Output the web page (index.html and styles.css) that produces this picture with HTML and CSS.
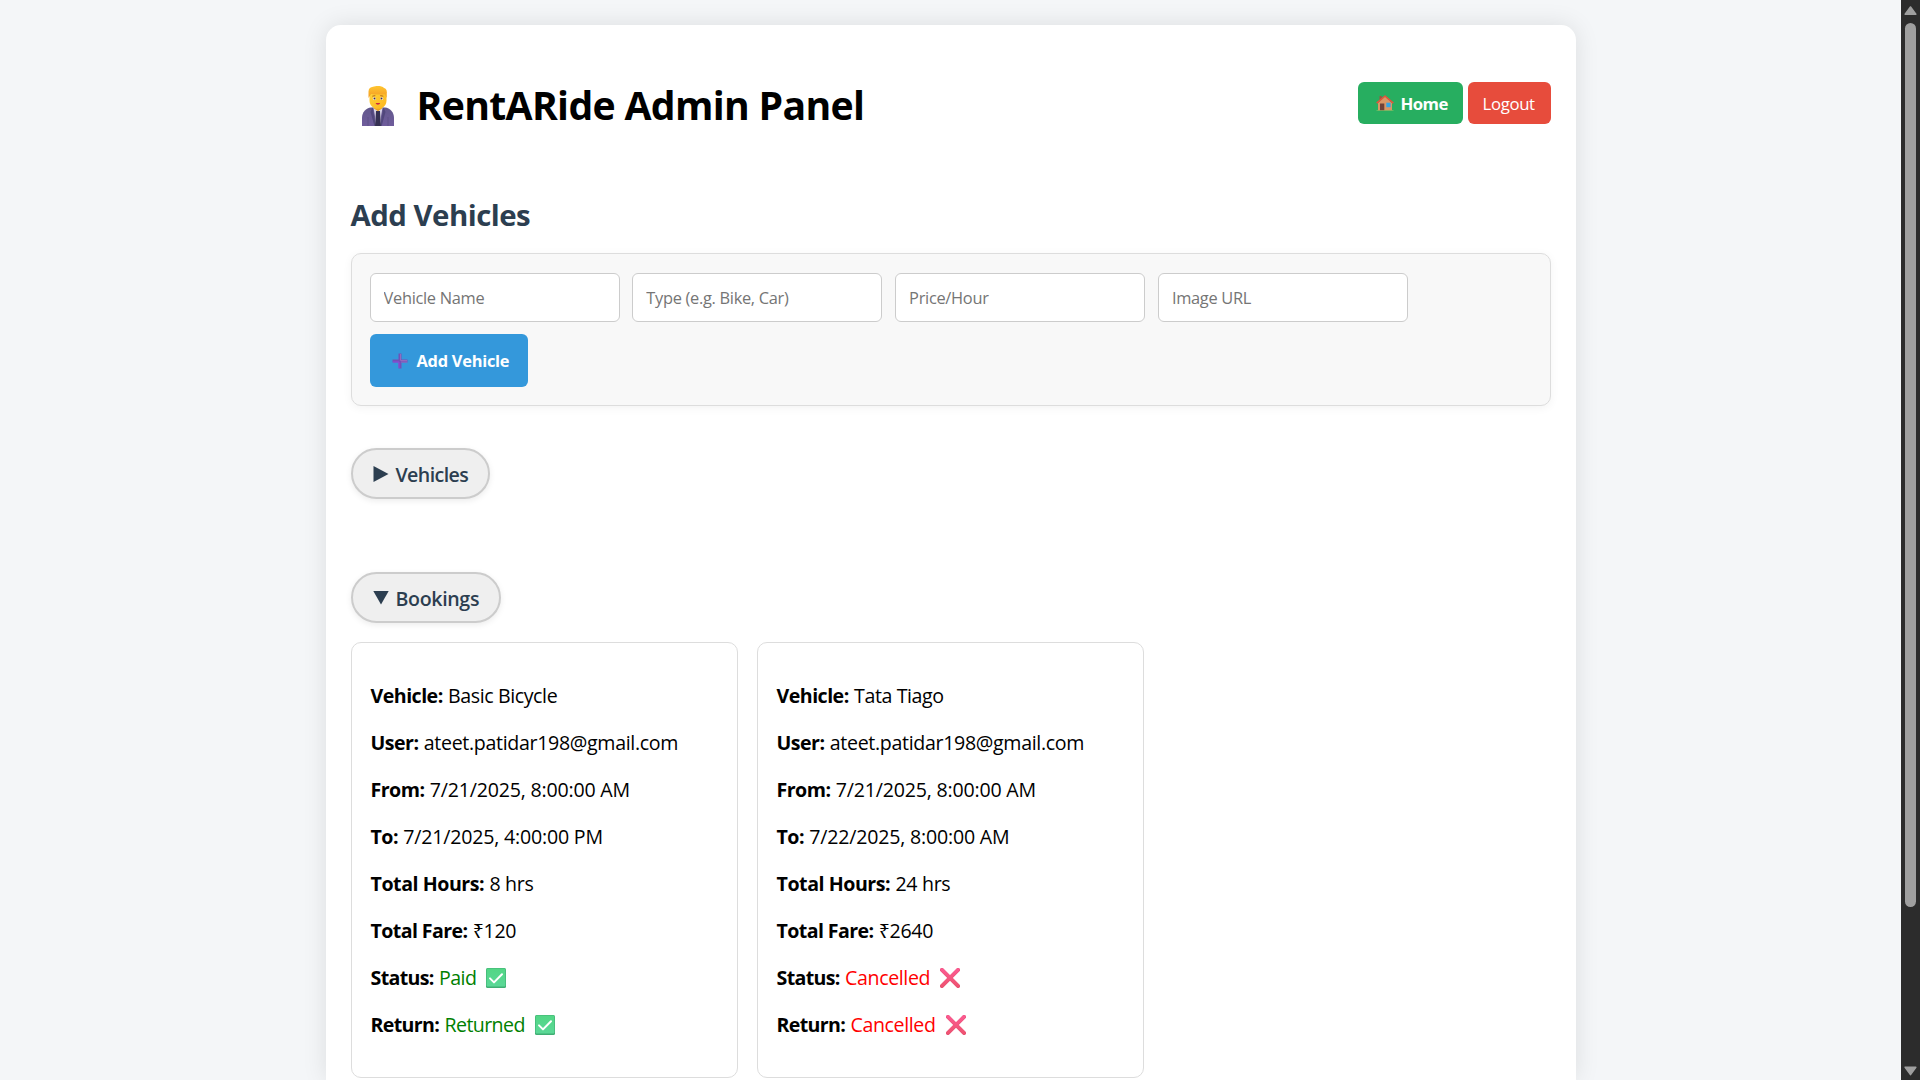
FILE: index.html
```
<!DOCTYPE html>
<html lang="en">
<head>
<meta charset="utf-8">
<title>RentARide Admin Panel</title>
<link rel="stylesheet" href="styles.css">
</head>
<body>
<svg class="sprite" aria-hidden="true">
  <defs>
    <linearGradient id="green" x1="0" y1="0" x2="0" y2="1"><stop offset="0" stop-color="#52d685"/><stop offset="1" stop-color="#5bd897"/></linearGradient>
    <linearGradient id="pink" x1="0" y1="0" x2="0" y2="1"><stop offset="0" stop-color="#fb5a90"/><stop offset="1" stop-color="#ef5372"/></linearGradient>
    <linearGradient id="hair" x1="0" y1="0" x2="0" y2="1"><stop offset="0" stop-color="#ffc52f"/><stop offset="1" stop-color="#f39a25"/></linearGradient>
    <linearGradient id="face" x1="0" y1="0" x2="1" y2="1"><stop offset="0" stop-color="#ffd43c"/><stop offset="1" stop-color="#fbb41c"/></linearGradient>
    <linearGradient id="suit" x1="0" y1="0" x2="0" y2="1"><stop offset="0" stop-color="#62588c"/><stop offset="1" stop-color="#6f5c9c"/></linearGradient>
    <symbol id="check" viewBox="0 0 20 20">
      <rect width="20" height="20" rx="1.5" fill="#3fae73"/>
      <rect x=".6" y=".6" width="18.800" height="18" rx="1" fill="url(#green)"/>
      <path d="M4 10.400l4 4 8-8.200" fill="none" stroke="#fff" stroke-width="2" stroke-linecap="round" stroke-linejoin="round"/>
    </symbol>
    <symbol id="cross" viewBox="0 0 20 20">
      <path d="M1.900 1.900l16.200 16.200M18.100 1.900L1.900 18.100" fill="none" stroke="#e04c70" stroke-width="3.800" stroke-linecap="round"/>
      <path d="M2 1.800l16 16M18 1.800L2 17.800" fill="none" stroke="url(#pink)" stroke-width="3.400" stroke-linecap="round"/>
    </symbol>
  </defs>
</svg>
<div class="page">
  <main class="container">
    <header class="header">
      <h1 class="title">
        <svg class="icon-admin" viewBox="0 0 32 40" aria-hidden="true">
          <path d="M0 40v-8c0-6 4-10 9-10.500h14c5 .5 9 4.500 9 10.500v8z" fill="url(#suit)"/>
          <path d="M6 31v9M26 31v9" stroke="#594e83" stroke-width=".7"/>
          <path d="M11.500 22h9l-1.500 8-.5 10h-5L13 30z" fill="#d8d3e8"/>
          <path d="M10.500 21.500l3.400 18.500h-1.500L8.500 26zM21.500 21.500L18.200 40h1.500L23.500 26z" fill="#51477c"/>
          <path d="M14 25h4l.9 15h-5.800z" fill="#353052"/>
          <path d="M12 18h8v4.500l-4 2.700-4-2.700z" fill="#eda31e"/>
          <path d="M7.500 6h17v8.500c0 5-3.800 8.300-8.500 8.300s-8.500-3.300-8.500-8.300z" fill="url(#face)"/>
          <path d="M6.500 12V5.500C6.500 2.600 8.600 1 11 .8 14-.2 20-.4 22 2c2.500.7 3.200 3 2.600 5.500V12l-1.500-3.700c-4.200.3-9.600.3-14-.3z" fill="url(#hair)"/>
          <path d="M10.300 10.200l3-.6M18.300 9.600l3 .6" stroke="#b76a1b" stroke-width="1" fill="none"/>
          <circle cx="12.300" cy="12.600" r="1.500" fill="#fff4dc"/><circle cx="19.700" cy="12.600" r="1.500" fill="#fff4dc"/>
          <circle cx="12.500" cy="12.600" r="1" fill="#44304a"/><circle cx="19.500" cy="12.600" r="1" fill="#44304a"/>
          <path d="M13.700 17h4.400c-.4 2.300-4 2.300-4.400 0z" fill="#ca2941"/>
        </svg>
        <span>RentARide Admin Panel</span>
      </h1>
      <nav class="nav">
        <a class="btn btn-home">
          <svg class="icon-home" viewBox="0 0 18 16" aria-hidden="true">
            <path d="M.5 15h17v1H.5z" fill="#5ebd62"/>
            <path d="M3.500 1h2.300v4H3.500z" fill="#9d5541"/>
            <path d="M2 8l7-6.500L16 8v7.200H2z" fill="#d99766"/>
            <path d="M4 8.500h4.300v6.700H4z" fill="#704239"/>
            <path d="M10.300 7.700h4.300v4.500h-4.300z" fill="#36a5e5"/>
            <path d="M.7 8.200L9 1l8.300 7.200" fill="none" stroke="#e5533c" stroke-width="1.600" stroke-linejoin="round"/>
          </svg>
          <span>Home</span>
        </a>
        <a class="btn btn-logout">Logout</a>
      </nav>
    </header>

    <h2 class="section-title">Add Vehicles</h2>
    <form class="vehicle-form">
      <input class="field" type="text" placeholder="Vehicle Name">
      <input class="field" type="text" placeholder="Type (e.g. Bike, Car)">
      <input class="field" type="text" placeholder="Price/Hour">
      <input class="field" type="text" placeholder="Image URL">
      <button class="btn-add" type="button">
        <svg class="icon-plus" viewBox="0 0 16 16" aria-hidden="true">
          <path d="M6.500.5h3v6h6v3h-6v6h-3v-6h-6v-3h6z" fill="#7250b8"/>
          <path d="M1 9h6v6" fill="none" stroke="#8c4bdc" stroke-width="1"/>
          <path d="M9 9h6.200M8.500 1v6.500H15" fill="none" stroke="#936bbd" stroke-width="1"/>
        </svg>
        <span>Add Vehicle</span>
      </button>
    </form>

    <button class="toggle toggle-vehicles" type="button">
      <svg class="marker" viewBox="0 0 16 16" aria-hidden="true"><path d="M.5 0v16L15.500 8z" fill="#2c3e50"/></svg>
      <span>Vehicles</span>
    </button>
    <button class="toggle toggle-bookings" type="button">
      <svg class="marker" viewBox="0 0 16 16" aria-hidden="true"><path d="M.3 1h15.400L8 14.500z" fill="#2c3e50"/></svg>
      <span>Bookings</span>
    </button>

    <section class="cards">
      <article class="card">
        <p><strong>Vehicle:</strong> <span class="name">Basic Bicycle</span></p>
        <p><strong>User:</strong> ateet.patidar198@gmail.com</p>
        <p><strong>From:</strong> <span class="date">7/21/2025, 8:00:00 AM</span></p>
        <p><strong>To:</strong> <span class="date">7/21/2025, 4:00:00 PM</span></p>
        <p><strong class="total">Total Hours:</strong> 8 hrs</p>
        <p><strong class="fare">Total Fare:</strong> ₹120</p>
        <p><strong class="state">Status:</strong> <span class="ok">Paid</span><svg class="mark"><use href="#check"/></svg></p>
        <p><strong class="state">Return:</strong> <span class="ok">Returned</span><svg class="mark"><use href="#check"/></svg></p>
      </article>
      <article class="card">
        <p><strong>Vehicle:</strong> <span class="name">Tata Tiago</span></p>
        <p><strong>User:</strong> ateet.patidar198@gmail.com</p>
        <p><strong>From:</strong> <span class="date">7/21/2025, 8:00:00 AM</span></p>
        <p><strong>To:</strong> <span class="date">7/22/2025, 8:00:00 AM</span></p>
        <p><strong class="total">Total Hours:</strong> 24 hrs</p>
        <p><strong class="fare">Total Fare:</strong> ₹2640</p>
        <p><strong class="state">Status:</strong> <span class="bad">Cancelled</span><svg class="mark"><use href="#cross"/></svg></p>
        <p><strong class="state">Return:</strong> <span class="bad">Cancelled</span><svg class="mark"><use href="#cross"/></svg></p>
      </article>
    </section>
  </main>
</div>
<div class="scrollbar" aria-hidden="true">
  <svg class="arrow" viewBox="0 0 13 10"><path d="M6.500 1L11.800 8.200H1.200z" fill="#9f9f9f" stroke="#9f9f9f" stroke-width="1.600" stroke-linejoin="round"/></svg>
  <div class="thumb"></div>
  <svg class="arrow arrow-down" viewBox="0 0 13 10"><path d="M1.200 1.200h10.600L6.500 8.600z" fill="#9f9f9f" stroke="#9f9f9f" stroke-width="1.600" stroke-linejoin="round"/></svg>
</div>
</body>
</html>
```
FILE: styles.css
```
* { box-sizing: border-box; }

body {
  margin: 0;
  height: 1080px;
  display: flex;
  overflow: hidden;
  background: #f4f6f8;
  color: #000;
  font-family: "Open Sans", "Noto Sans", sans-serif;
  font-size: 19.6px;
  line-height: 27px;
}

.sprite { position: absolute; width: 0; height: 0; }

.page { flex: 1; padding-top: 25px; }

.container {
  width: 1250px;
  height: 1055px;
  margin: 0 auto;
  padding: 53px 25px 0;
  background: #fff;
  border-radius: 15px 15px 0 0;
  box-shadow: 0 0 25px rgba(0, 0, 0, 0.1);
}

.header {
  display: flex;
  justify-content: space-between;
  align-items: flex-start;
}

.title {
  display: flex;
  gap: 23px;
  margin: 0;
  padding-left: 11px;
  font-size: 39.2px;
  line-height: 54px;
  letter-spacing: -0.68px;
}

.icon-admin { width: 32px; height: 40px; margin-top: 8px; }

.nav { display: flex; gap: 5px; padding-top: 4px; }

.btn {
  display: flex;
  align-items: center;
  height: 42px;
  border-radius: 6px;
  color: #fff;
  font-size: 16.8px;
  letter-spacing: -0.35px;
}

.btn-home {
  width: 105px;
  padding-left: 18px;
  gap: 7px;
  background: #27ae60;
  font-weight: 700;
  letter-spacing: -0.6px;
}

.btn-logout { width: 83px; padding-left: 15px; background: #e74c3c; }

.icon-home { width: 18px; height: 16px; }

.section-title {
  margin: 63px 0 18px;
  color: #2c3e50;
  font-size: 29.4px;
  line-height: 40px;
  letter-spacing: -0.52px;
}

.vehicle-form {
  display: flex;
  flex-wrap: wrap;
  gap: 12px 12.8px;
  height: 153px;
  padding: 19px 18px 18px;
  background: #f8f8f8;
  border: 1px solid #ddd;
  border-radius: 10px;
  box-shadow: 0 2px 10px rgba(0, 0, 0, 0.05);
}

.field {
  width: 250px;
  height: 49px;
  padding: 0 13px;
  background: #fff;
  border: 1px solid #ccc;
  border-radius: 6px;
  font: 16.4px "Open Sans", sans-serif;
  letter-spacing: -0.3px;
}

.field::placeholder { color: #757575; opacity: 1; }

.btn-add {
  display: flex;
  align-items: center;
  gap: 9px;
  width: 158px;
  height: 53px;
  margin-right: 700px;
  padding: 0 0 0 22px;
  background: #3498db;
  border: 0;
  border-radius: 6px;
  color: #fff;
  font: 700 16.4px "Open Sans", sans-serif;
  letter-spacing: -0.25px;
}

.icon-plus { width: 16px; height: 16px; }

.toggle {
  display: flex;
  align-items: center;
  gap: 7px;
  height: 51px;
  padding: 1px 0 0 20px;
  background: #efefef;
  border: 2px solid #ccc;
  border-radius: 25.5px;
  box-shadow: 0 2px 6px rgba(0, 0, 0, 0.08);
  color: #2c3e50;
  font: 600 19.6px "Open Sans", sans-serif;
  white-space: nowrap;
}

.toggle-vehicles { width: 139px; margin-top: 42px; letter-spacing: -0.6px; }
.toggle-bookings { width: 150px; margin-top: 73px; letter-spacing: -0.35px; }

.marker { flex: none; width: 16px; height: 16px; }

.cards { display: flex; gap: 19px; margin-top: 19px; }

.card {
  width: 387px;
  height: 436px;
  padding: 19px;
  border: 1px solid #ddd;
  border-radius: 10px;
  letter-spacing: -0.33px;
}

.card p { height: 27px; margin: 20px 0; white-space: nowrap; }

.card strong { letter-spacing: -0.52px; margin-right: 0.5px; }
.card .total { letter-spacing: -0.45px; }
.card .fare { letter-spacing: -0.6px; }
.card .state { letter-spacing: -0.65px; }

.name { letter-spacing: -0.4px; }
.date { letter-spacing: -0.2px; }
.ok { color: #008000; letter-spacing: -0.6px; }
.bad { color: #f00; letter-spacing: -0.38px; }

.mark {
  width: 20px;
  height: 20px;
  margin-left: 10px;
  vertical-align: -3px;
}

.scrollbar {
  display: flex;
  flex-direction: column;
  align-items: center;
  width: 19px;
  padding: 6px 0 4px;
  background: #2c2c2c;
}

.arrow { width: 13px; height: 10px; }
.arrow-down { margin-top: auto; }

.thumb {
  width: 11px;
  height: 884px;
  margin-top: 7px;
  background: #9f9f9f;
  border-radius: 6px;
}
```
